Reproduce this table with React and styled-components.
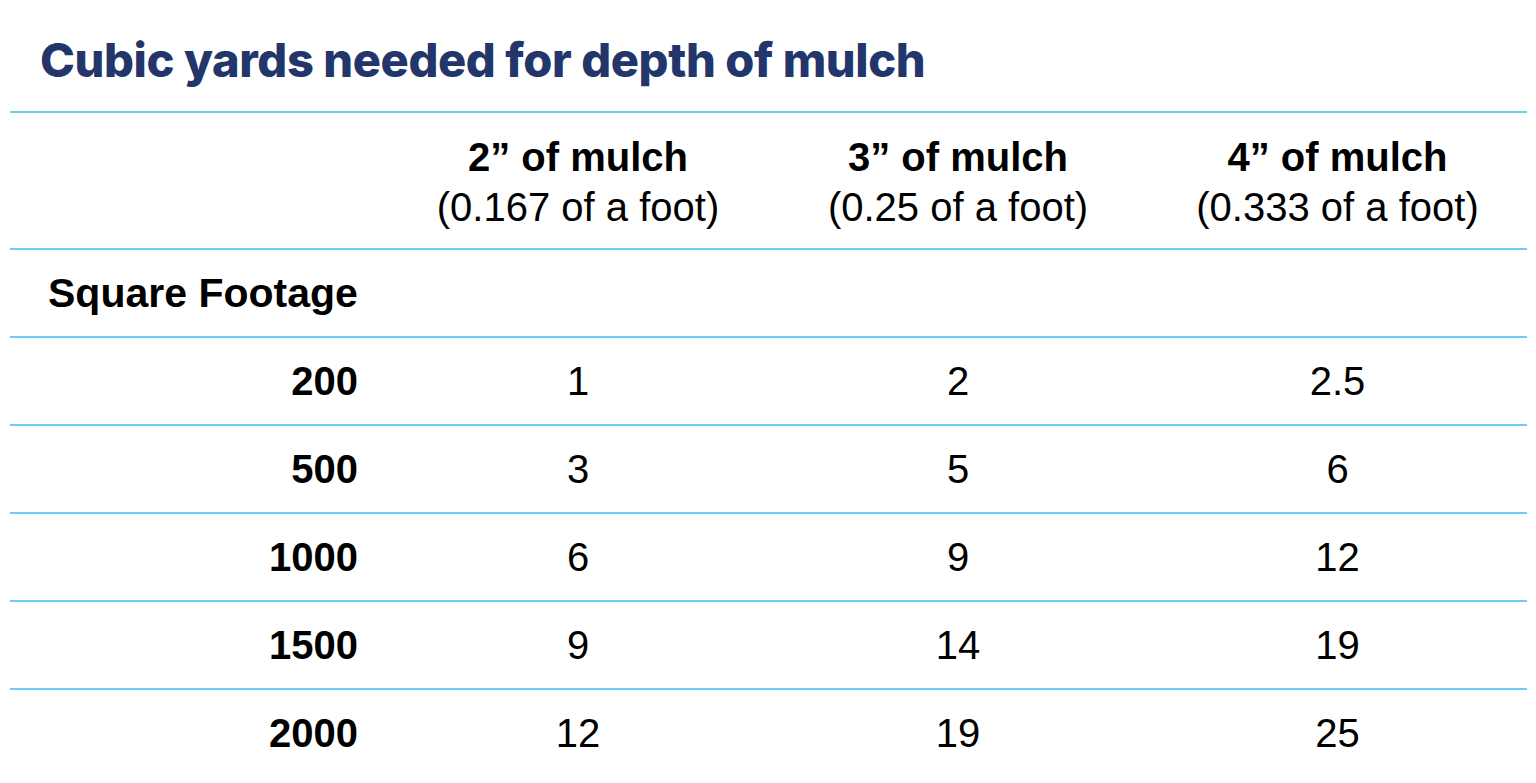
import React from "react";
import styled, { createGlobalStyle } from "styled-components";

const Global = createGlobalStyle`
  html, body {
    margin: 0;
    padding: 0;
    background: #ffffff;
  }
  body {
    font-family: "Liberation Sans", Arial, sans-serif;
    color: #000;
  }
`;

const Page = styled.div`
  width: 1536px;
  height: 783px;
  overflow: hidden;
  box-sizing: border-box;
  padding: 0 9px 0 10px;
`;

const Title = styled.h1`
  margin: 0;
  height: 111px;
  box-sizing: border-box;
  padding: 30px 0 0 30px;
  font-family: Inter, "Open Sans", sans-serif;
  font-weight: 800;
  font-size: 47px;
  line-height: 60px;
  color: #22366b;
  letter-spacing: -0.4px;
`;

const Row = styled.div`
  display: grid;
  grid-template-columns: 378px 380px 380px 379px;
  align-items: center;
  height: ${(p) => p.height || 86}px;
  border-top: 2px solid #72cbf5;
`;

const Label = styled.div`
  font-weight: 700;
  font-size: ${(p) => (p.left ? 41 : 40)}px;
  text-align: ${(p) => (p.left ? "left" : "right")};
  padding: ${(p) => (p.left ? "0 0 0 38px" : "0 30px 0 0")};
`;

const Cell = styled.div`
  text-align: center;
  font-size: 40px;
`;

const HeadCell = styled.div`
  text-align: center;
  font-size: 40px;
  line-height: 50px;
  padding-top: 2px;
`;

const HeadTop = styled.div`
  font-weight: 700;
`;

const columns = [
  ["2” of mulch", "(0.167 of a foot)"],
  ["3” of mulch", "(0.25 of a foot)"],
  ["4” of mulch", "(0.333 of a foot)"],
];

const rows = [
  ["200", "1", "2", "2.5"],
  ["500", "3", "5", "6"],
  ["1000", "6", "9", "12"],
  ["1500", "9", "14", "19"],
  ["2000", "12", "19", "25"],
];

export default function App() {
  return (
    <Page>
      <Global />
      <Title>Cubic yards needed for depth of mulch</Title>
      <Row height={135}>
        <div />
        {columns.map(([a, b]) => (
          <HeadCell key={a}>
            <HeadTop>{a}</HeadTop>
            <div>{b}</div>
          </HeadCell>
        ))}
      </Row>
      <Row>
        <Label left>Square Footage</Label>
      </Row>
      {rows.map(([sq, ...vals]) => (
        <Row key={sq}>
          <Label>{sq}</Label>
          {vals.map((v, i) => (
            <Cell key={i}>{v}</Cell>
          ))}
        </Row>
      ))}
    </Page>
  );
}
